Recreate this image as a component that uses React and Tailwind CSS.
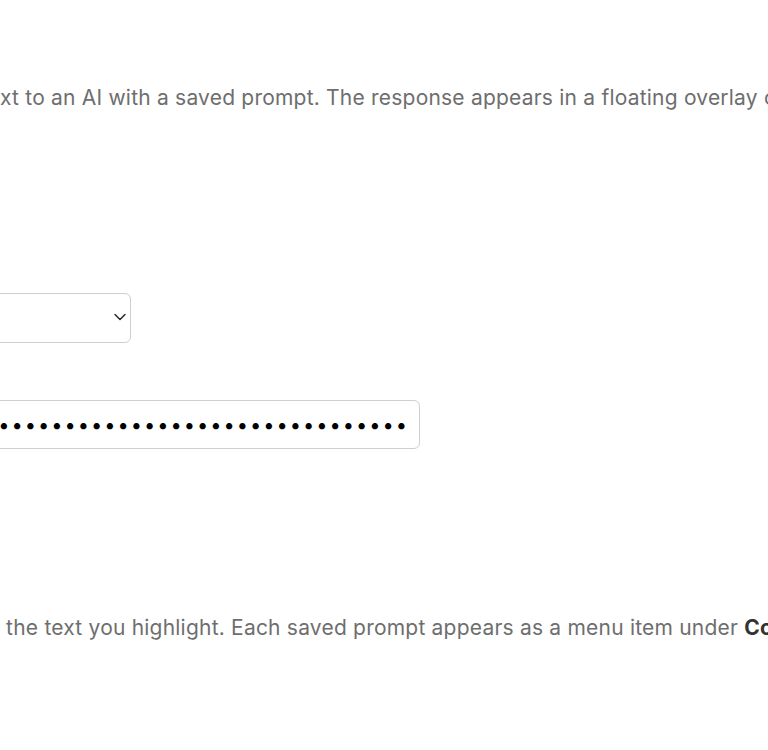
export default function App() {
  return (
    <div className="min-h-[750px] w-[768px] overflow-hidden bg-white font-['Inter','Liberation_Sans',sans-serif] text-[21px] tracking-[0.01em] text-[#6e6e6e]">
      <div className="ml-[-300px] w-[1400px]">
        <p className="pt-[84px] leading-[28px] whitespace-nowrap">
          <span className="inline-block w-[300px] text-right">Send selected te</span>xt to an AI with a saved prompt. The response appears in a floating overlay on top of the page.
        </p>

        <div className="mt-[181px] flex">
          <div className="relative w-[431px]">
            <select className="h-[50px] w-full appearance-none rounded-[6px] border border-[#cfcfcf] bg-white px-3 text-[16px] text-[#222]">
              <option></option>
            </select>
            <svg className="pointer-events-none absolute right-[5px] top-[20px]" width="12" height="8" viewBox="0 0 12 8" fill="none">
              <path d="M1 1.5l5 5 5-5" stroke="#222" strokeWidth="1.4" strokeLinecap="round" strokeLinejoin="round" />
            </svg>
          </div>
        </div>

        <div className="mt-[57px] flex">
          <input
            type="password"
            readOnly
            value={"x".repeat(60)}
            className="h-[49px] w-[720px] rounded-[6px] border border-[#cfcfcf] bg-white pl-[19px] pr-2 text-[20px] tracking-[2px] text-black outline-none"
          />
        </div>

        <p className="mt-[165px] leading-[28px] whitespace-nowrap">
          <span className="inline-block w-[300px] text-right">Runs a prompt on</span> the text you highlight. Each saved prompt appears as a menu item under <b className="font-bold text-[#333]">Context Menu</b>.
        </p>
      </div>
    </div>
  );
}
